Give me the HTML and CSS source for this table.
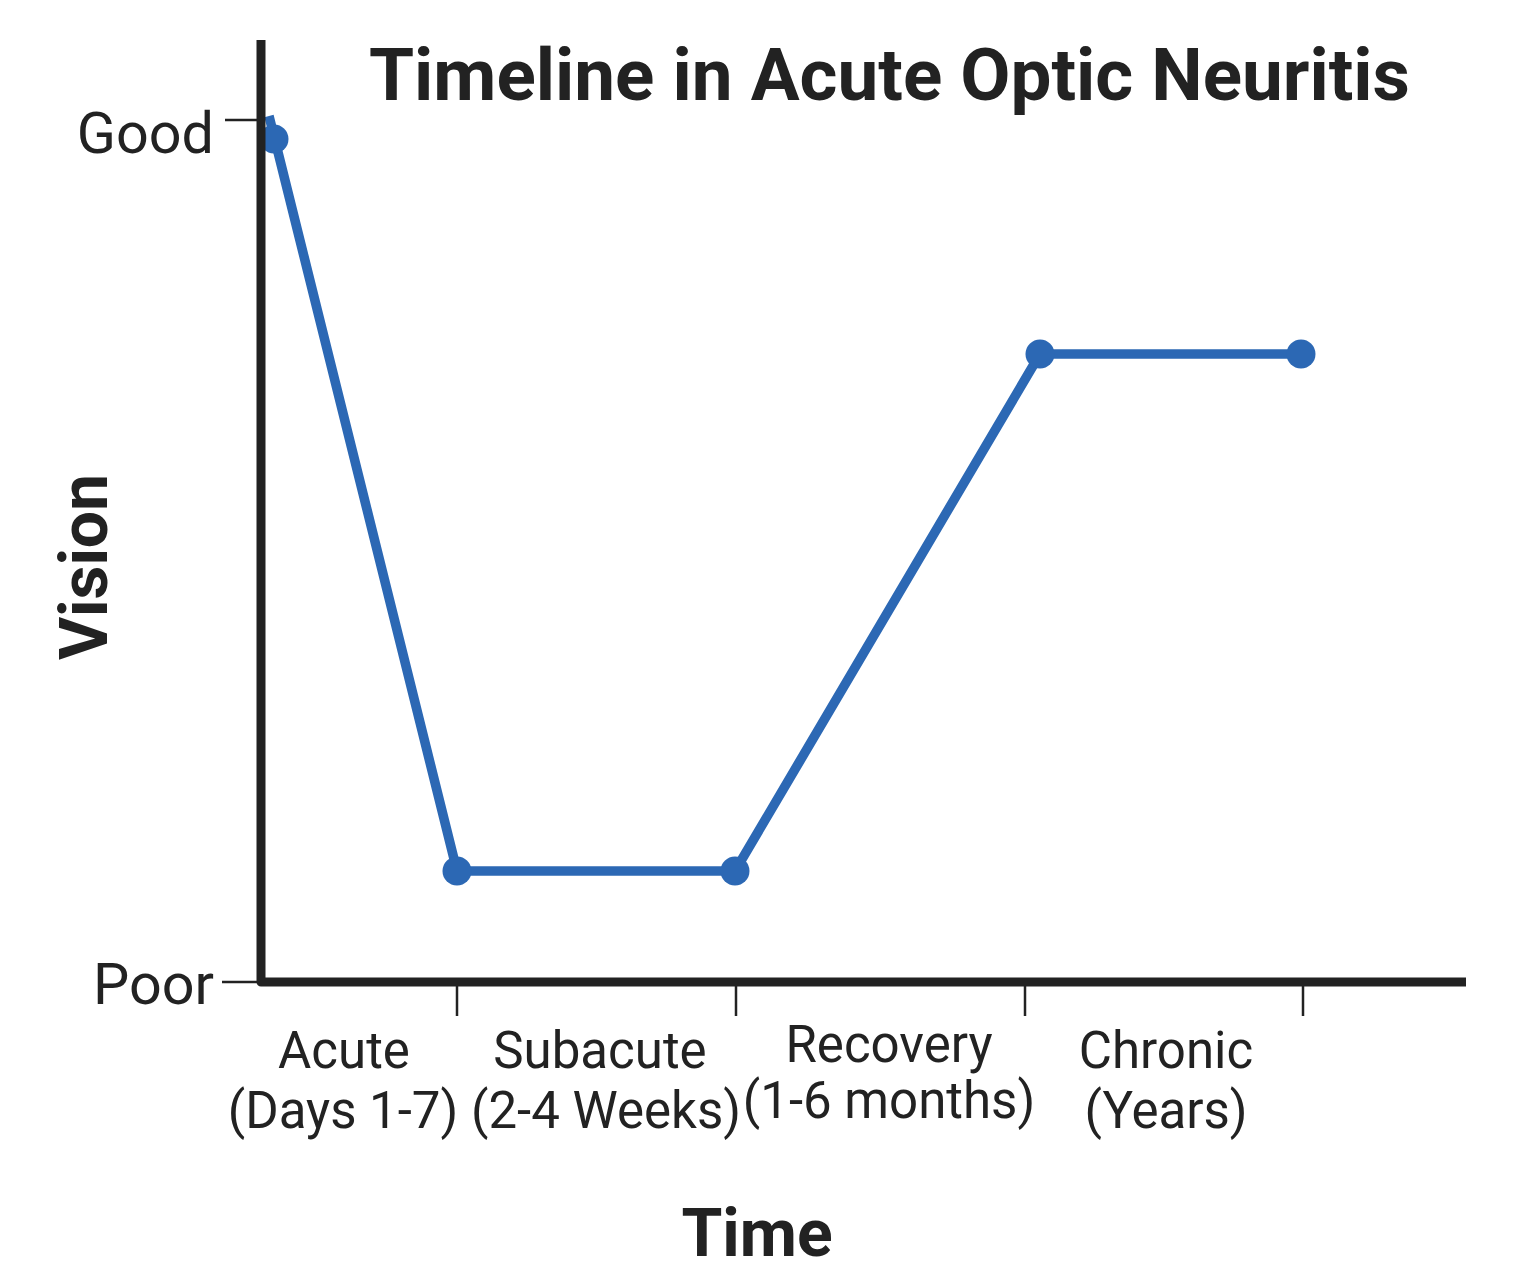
FILE: index.html
```html
<!DOCTYPE html>
<html lang="en">
<head>
<meta charset="utf-8">
<title>Timeline in Acute Optic Neuritis</title>
<link rel="stylesheet" href="styles.css">
</head>
<body>
<main class="figure">
  <svg class="chart" width="1514" height="1280" viewBox="0 0 1514 1280" xmlns="http://www.w3.org/2000/svg">
    <text class="title" x="369" y="100">Timeline in Acute Optic Neuritis</text>

    <text class="level" x="214" y="153">Good</text>
    <text class="level" x="214" y="1004">Poor</text>

    <text class="axis-title" transform="translate(107 567) rotate(-90)">Vision</text>
    <text class="axis-title axis-title--x" x="757" y="1256">Time</text>

    <g class="phase">
      <text x="344" y="1068">Acute</text>
      <text x="343" y="1128">(Days 1-7)</text>
      <text x="600" y="1068">Subacute</text>
      <text x="606" y="1128">(2-4 Weeks)</text>
      <text x="889" y="1062">Recovery</text>
      <text x="889" y="1118">(1-6 months)</text>
      <text x="1166" y="1068">Chronic</text>
      <text x="1166" y="1128">(Years)</text>
    </g>

    <polyline class="series" points="269,116 457,871 735,871 1040,354 1301,354"/>
    <g class="dots">
      <circle cx="274" cy="139" r="14.5"/>
      <circle cx="457" cy="871" r="14.5"/>
      <circle cx="735" cy="871" r="14.5"/>
      <circle cx="1040" cy="354" r="14.5"/>
      <circle cx="1301" cy="354" r="14.5"/>
    </g>

    <g class="ticks">
      <line x1="225" y1="120" x2="258" y2="120"/>
      <line x1="222" y1="982" x2="258" y2="982"/>
      <line x1="457" y1="986" x2="457" y2="1016"/>
      <line x1="736" y1="986" x2="736" y2="1016"/>
      <line x1="1025" y1="986" x2="1025" y2="1016"/>
      <line x1="1303" y1="986" x2="1303" y2="1016"/>
    </g>
    <polyline class="axes" points="261,40 261,982 1466,982"/>
  </svg>
</main>
</body>
</html>
```

FILE: styles.css
```css
html, body {
  margin: 0;
  padding: 0;
  background: #ffffff;
}

.figure {
  width: 1514px;
  height: 1280px;
  font-family: Roboto, "Liberation Sans", sans-serif;
}

.chart {
  display: block;
}

.title {
  font-family: Roboto, "Liberation Sans", sans-serif;
  font-weight: 700;
  font-size: 72.8px;
  fill: #222222;
}

.level {
  font-family: Roboto, "Liberation Sans", sans-serif;
  font-size: 57.5px;
  fill: #222222;
  text-anchor: end;
}

.axis-title {
  font-family: Roboto, "Liberation Sans", sans-serif;
  font-weight: 700;
  font-size: 66px;
  fill: #222222;
  text-anchor: middle;
}

.phase text {
  font-family: Roboto, "Liberation Sans", sans-serif;
  font-size: 51px;
  fill: #222222;
  text-anchor: middle;
}

.series {
  fill: none;
  stroke: #2c68b4;
  stroke-width: 9.5;
  stroke-linejoin: round;
}

.dots circle {
  fill: #2c68b4;
}

.ticks line {
  stroke: #222222;
  stroke-width: 2.5;
}

.axes {
  fill: none;
  stroke: #222222;
  stroke-width: 9;
  stroke-linejoin: round;
}
```
